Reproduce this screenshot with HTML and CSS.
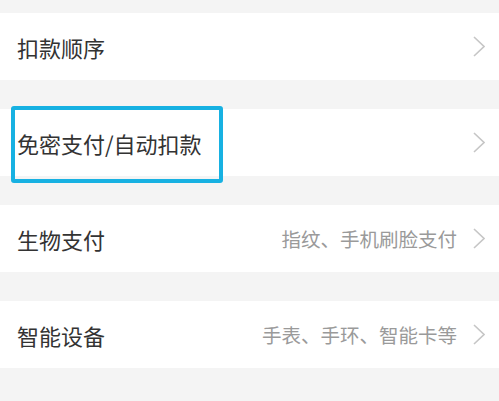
FILE: index.html
```html
<!DOCTYPE html>
<html lang="zh-CN">
<head>
  <meta charset="UTF-8">
  <meta name="viewport" content="width=device-width, initial-scale=1.0">
  <title>支付设置</title>
  <link rel="stylesheet" href="styles.css">
</head>
<body>
  <div class="list">
    <div class="row">
      <span class="title">扣款顺序</span>
      <span class="side">
        <svg class="arrow" width="12" height="21" viewBox="0 0 12 21"><path d="M1 1 L11 10.5 L1 20" fill="none" stroke="#c6c6c6" stroke-width="1.6"/></svg>
      </span>
    </div>
    <div class="row highlighted">
      <span class="title">免密支付/自动扣款</span>
      <span class="side">
        <svg class="arrow" width="12" height="21" viewBox="0 0 12 21"><path d="M1 1 L11 10.5 L1 20" fill="none" stroke="#c6c6c6" stroke-width="1.6"/></svg>
      </span>
      <div class="mark"></div>
    </div>
    <div class="row">
      <span class="title">生物支付</span>
      <span class="side">
        <span class="hint">指纹、手机刷脸支付</span>
        <svg class="arrow" width="12" height="21" viewBox="0 0 12 21"><path d="M1 1 L11 10.5 L1 20" fill="none" stroke="#c6c6c6" stroke-width="1.6"/></svg>
      </span>
    </div>
    <div class="row">
      <span class="title">智能设备</span>
      <span class="side">
        <span class="hint">手表、手环、智能卡等</span>
        <svg class="arrow" width="12" height="21" viewBox="0 0 12 21"><path d="M1 1 L11 10.5 L1 20" fill="none" stroke="#c6c6c6" stroke-width="1.6"/></svg>
      </span>
    </div>
  </div>
</body>
</html>
```

FILE: styles.css
```css
* {
  margin: 0;
  padding: 0;
  box-sizing: border-box;
}
body {
  font-family: "Noto Sans CJK SC", "Noto Sans", sans-serif;
  background-color: #f4f4f4;
  width: 499px;
  height: 401px;
  overflow: hidden;
}
.list {
  display: flex;
  flex-direction: column;
  gap: 29px;
  padding-top: 13px;
}
.row {
  position: relative;
  height: 67px;
  background: #fff;
  display: flex;
  align-items: center;
  justify-content: space-between;
  padding: 0 14px 0 17px;
}
.title {
  font-size: 22px;
  color: #333;
  letter-spacing: 0;
}
.side {
  display: flex;
  align-items: center;
  gap: 16px;
}
.hint {
  font-size: 19.5px;
  color: #9a9a9a;
}
.arrow {
  display: block;
}
.mark {
  position: absolute;
  left: 11px;
  top: -3px;
  width: 212px;
  height: 77px;
  border: 4px solid #17b1e2;
  border-radius: 3px;
}
```
